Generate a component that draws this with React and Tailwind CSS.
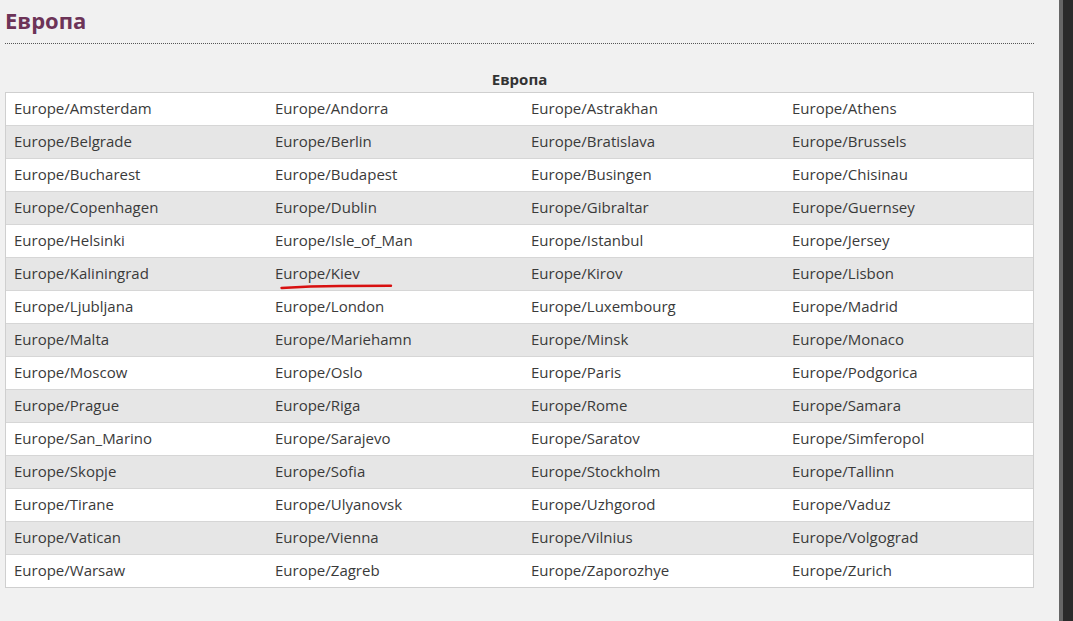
import React from "react";

const rows = [
  ["Amsterdam", "Andorra", "Astrakhan", "Athens"],
  ["Belgrade", "Berlin", "Bratislava", "Brussels"],
  ["Bucharest", "Budapest", "Busingen", "Chisinau"],
  ["Copenhagen", "Dublin", "Gibraltar", "Guernsey"],
  ["Helsinki", "Isle_of_Man", "Istanbul", "Jersey"],
  ["Kaliningrad", "Kiev", "Kirov", "Lisbon"],
  ["Ljubljana", "London", "Luxembourg", "Madrid"],
  ["Malta", "Mariehamn", "Minsk", "Monaco"],
  ["Moscow", "Oslo", "Paris", "Podgorica"],
  ["Prague", "Riga", "Rome", "Samara"],
  ["San_Marino", "Sarajevo", "Saratov", "Simferopol"],
  ["Skopje", "Sofia", "Stockholm", "Tallinn"],
  ["Tirane", "Ulyanovsk", "Uzhgorod", "Vaduz"],
  ["Vatican", "Vienna", "Vilnius", "Volgograd"],
  ["Warsaw", "Zagreb", "Zaporozhye", "Zurich"],
];

const widths = ["w-[261px]", "w-[256px]", "w-[261px]", "w-[249px]"];

export default function App() {
  return (
    <div
      className="flex w-[1073px] h-[621px] overflow-hidden bg-[#f1f1f1]"
      style={{ fontFamily: '"Open Sans", "Noto Sans", sans-serif' }}
    >
      <div className="flex-1 pl-[5px] pr-[25px] relative">
        <h1 className="text-[22px] leading-[40px] font-bold text-[#6d3458] h-[44px] border-b border-dotted border-[#555]">
          Европа
        </h1>
        <div className="pt-[24px]">
          <div className="text-center text-[15px] font-bold text-[#333] leading-[22px] h-[24px]">
            Европа
          </div>
          <div className="border-x border-t border-[#cfcfcf] bg-white relative">
            {rows.map((r, i) => (
              <div
                key={i}
                className={`flex h-[33px] items-center border-b ${i === rows.length - 1 ? "border-[#cfcfcf]" : "border-[#d6d6d6]"} ${i % 2 === 1 ? "bg-[#e6e6e6]" : "bg-white"}`}
              >
                {r.map((c, j) => (
                  <div
                    key={j}
                    className={`${widths[j]} pl-[8px] text-[15px] text-[#3a3a3a] leading-[20px] pb-[2px] ${j === 3 ? "flex-1" : ""}`}
                  >
                    Europe/{c}
                  </div>
                ))}
              </div>
            ))}
            <svg
              className="absolute left-[274px] top-[190px]"
              width="114"
              height="8"
              viewBox="0 0 114 8"
            >
              <path
                d="M1.5 5 Q 30 3.2 60 3 T 111 2.8"
                stroke="#d81010"
                strokeWidth="2.4"
                fill="none"
                strokeLinecap="round"
              />
            </svg>
          </div>
        </div>
      </div>
      <div className="w-[4px] bg-[#666]" />
      <div className="w-[12px] bg-[#2a2a2a]" />
    </div>
  );
}
